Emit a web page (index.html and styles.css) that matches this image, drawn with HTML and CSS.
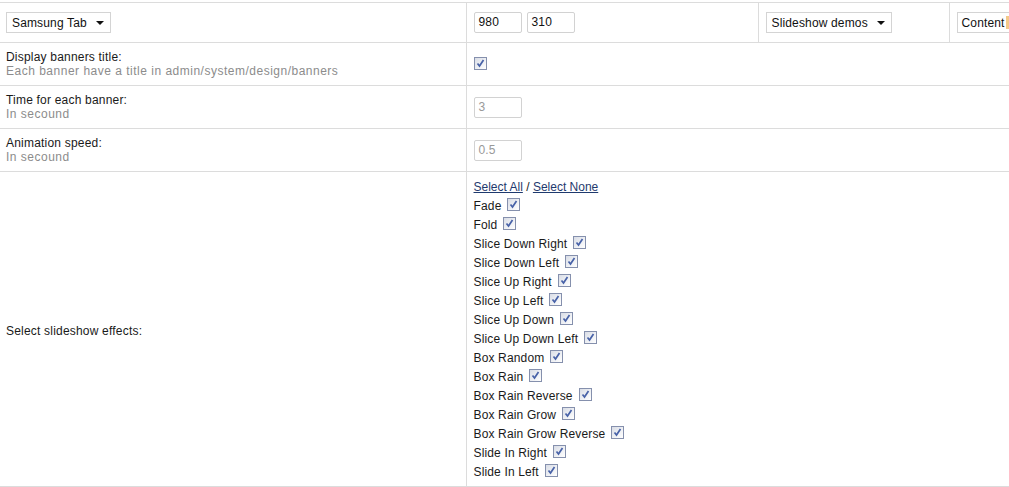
FILE: index.html
```html
<!DOCTYPE html>
<html>
<head>
<meta charset="utf-8">
<link rel="stylesheet" href="styles.css">
</head>
<body>
<table class="grid">
  <colgroup>
    <col class="c1"><col class="c2"><col class="c3"><col class="c4">
  </colgroup>
  <tr class="r-top">
    <td><span class="sel sel-tab">Samsung Tab<i class="arr"></i></span></td>
    <td><span class="inp">980</span><span class="inp">310</span></td>
    <td><span class="sel sel-demo">Slideshow demos<i class="arr"></i></span></td>
    <td><span class="sel sel-content">Content<i class="orange"></i></span></td>
  </tr>
  <tr class="r-opt">
    <td><div class="lbl">Display banners title:</div><div class="sub">Each banner have a title in admin/system/design/banners</div></td>
    <td colspan="3"><span class="cb cb-solo"></span></td>
  </tr>
  <tr class="r-opt">
    <td><div class="lbl">Time for each banner:</div><div class="sub">In secound</div></td>
    <td colspan="3"><span class="inp dim">3</span></td>
  </tr>
  <tr class="r-opt">
    <td><div class="lbl">Animation speed:</div><div class="sub">In secound</div></td>
    <td colspan="3"><span class="inp dim">0.5</span></td>
  </tr>
  <tr class="r-fx">
    <td class="mid"><div class="lbl">Select slideshow effects:</div></td>
    <td colspan="3">
      <div class="links"><a href="#">Select All</a> / <a href="#">Select None</a></div>
      <ul class="fx">
        <li>Fade<span class="cb"></span></li>
        <li>Fold<span class="cb"></span></li>
        <li>Slice Down Right<span class="cb"></span></li>
        <li>Slice Down Left<span class="cb"></span></li>
        <li>Slice Up Right<span class="cb"></span></li>
        <li>Slice Up Left<span class="cb"></span></li>
        <li>Slice Up Down<span class="cb"></span></li>
        <li>Slice Up Down Left<span class="cb"></span></li>
        <li>Box Random<span class="cb"></span></li>
        <li>Box Rain<span class="cb"></span></li>
        <li>Box Rain Reverse<span class="cb"></span></li>
        <li>Box Rain Grow<span class="cb"></span></li>
        <li>Box Rain Grow Reverse<span class="cb"></span></li>
        <li>Slide In Right<span class="cb"></span></li>
        <li>Slide In Left<span class="cb"></span></li>
      </ul>
    </td>
  </tr>
</table>
</body>
</html>
```
FILE: styles.css
```css
html, body {
  margin: 0;
  padding: 0;
  overflow: hidden;
  background: #fff;
}
body {
  padding-top: 2px;
  font-family: Arial, "Liberation Sans", sans-serif;
  font-size: 12px;
  letter-spacing: 0.15px;
  color: #1a1a1a;
}
.grid {
  border-collapse: collapse;
  table-layout: fixed;
  width: 1080px;
}
.c1 { width: 466px; }
.c2 { width: 292px; }
.c3 { width: 191px; }
.c4 { width: 131px; }
.grid td {
  border-top: 1px solid #dcdcdc;
  border-bottom: 1px solid #dcdcdc;
  border-left: 1px solid #dcdcdc;
  padding: 0 7px;
  vertical-align: middle;
}
.grid td:first-child { border-left: none; padding-left: 6px; }
.r-top td { height: 39px; }
.r-opt td { height: 42px; }
.r-fx td { height: 307px; vertical-align: top; padding-top: 7px; }
.r-fx td.mid { vertical-align: middle; padding-top: 3px; height: 311px; }
.lbl { line-height: 14px; color: #1a1a1a; letter-spacing: 0.2px; }
.sub { line-height: 14px; color: #8c8c8c; letter-spacing: 0.5px; }
.sel {
  display: inline-flex;
  align-items: center;
  height: 19px;
  border: 1px solid #d4d4d4;
  background: #fff;
  padding-left: 5px;
  box-sizing: content-box;
  color: #111;
  position: relative;
  vertical-align: middle;
}
.sel-tab { width: 98px; }
.sel-demo { width: 119px; }
.sel-content { width: 60px; padding-left: 4px; }
.arr {
  position: absolute;
  right: 6px;
  top: 8px;
  width: 0;
  height: 0;
  border-left: 4px solid transparent;
  border-right: 4px solid transparent;
  border-top: 4px solid #111;
}
.orange {
  position: absolute;
  left: 48px;
  top: 3px;
  width: 8px;
  height: 13px;
  background: #f5c98a;
}
.inp {
  display: inline-block;
  width: 42px;
  height: 19px;
  line-height: 19px;
  border: 1px solid #d2d2d2;
  border-radius: 2px;
  padding-left: 4px;
  margin-right: 5px;
  color: #111;
  vertical-align: middle;
  background: #fff;
}
.inp.dim { color: #999; }
.cb {
  display: inline-block;
  width: 11px;
  height: 11px;
  border: 1px solid #8590ad;
  background:
    url("data:image/svg+xml;utf8,<svg xmlns='http://www.w3.org/2000/svg' width='11' height='11'><path d='M2.5 5.5 L4.5 8 L8.5 2' fill='none' stroke='%234862a8' stroke-width='1.7'/></svg>") no-repeat center,
    linear-gradient(135deg, #d9dde6, #ffffff);
  margin-left: 6px;
  vertical-align: -1px;
}
.cb-solo { margin-left: 0; margin-top: 1px; }
.links { line-height: 16px; margin-bottom: 2px; letter-spacing: 0; }
.links a { color: #1f3a6e; text-decoration: underline; }
.fx { list-style: none; margin: 0; padding: 0; }
.fx li { height: 19px; line-height: 19px; color: #1a1a1a; }
```
